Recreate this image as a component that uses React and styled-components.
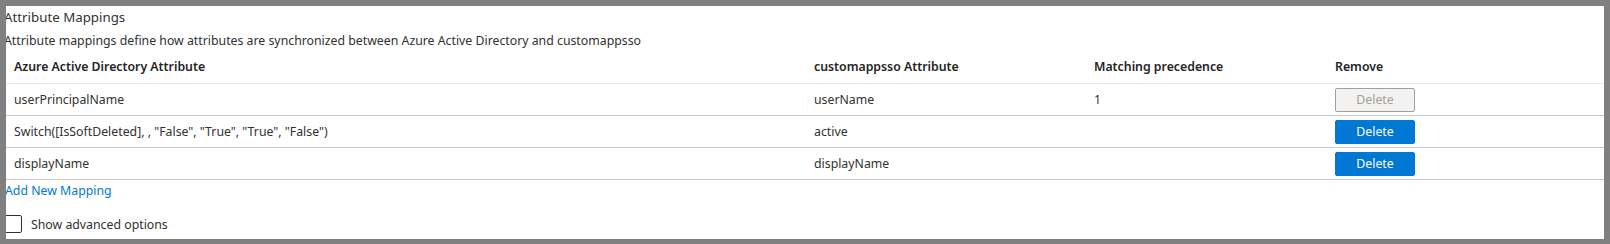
import React from "react";
import styled, { createGlobalStyle } from "styled-components";

const Global = createGlobalStyle`
  html, body { margin: 0; padding: 0; background: #808080; }
  body { font-family: "Segoe UI", "Noto Sans", "Open Sans", sans-serif; color: #323130; }
  * { box-sizing: border-box; }
`;

const Frame = styled.div`
  width: 1610px;
  height: 244px;
  border-style: solid;
  border-color: #808080;
  border-width: 6px 6px 5px 6px;
  background: #ffffff;
  overflow: hidden;
  display: flex;
  flex-direction: column;
  font-size: 12.3px;
`;

const Title = styled.div`
  margin-left: -2px;
  height: 22px;
  line-height: 22px;
  font-size: 13.3px;
  color: #323130;
`;

const Description = styled.div`
  margin-left: -2px;
  margin-top: 2px;
  height: 22px;
  line-height: 22px;
  font-size: 12.3px;
  color: #323130;
`;

const Table = styled.div`
  display: flex;
  flex-direction: column;
`;

const Row = styled.div`
  display: grid;
  grid-template-columns: 800px 280px 241px 1fr;
  align-items: center;
  height: 32px;
  padding-top: ${(p) => (p.$header ? "1px" : "0")};
  padding-bottom: ${(p) => (p.$header ? "2px" : "0")};
  border-bottom: 1px solid ${(p) => (p.$header ? "#edebe9" : "#c8c6c4")};
`;

const Cell = styled.div`
  padding-left: 8px;
  font-size: 12.3px;
  line-height: 18px;
  white-space: nowrap;
  font-weight: ${(p) => (p.$header ? 600 : 400)};
  color: ${(p) => (p.$header ? "#252423" : "#323130")};
`;

const DeleteButton = styled.button`
  width: 80px;
  height: 24px;
  padding: 0;
  border-radius: 2px;
  font-family: inherit;
  font-size: 12.3px;
  line-height: 20px;
  cursor: pointer;
  border: 1px solid ${(p) => (p.disabled ? "#a19f9d" : "#0078d4")};
  background: ${(p) => (p.disabled ? "#f3f2f1" : "#0078d4")};
  color: ${(p) => (p.disabled ? "#a19f9d" : "#ffffff")};
`;

const AddLink = styled.a`
  margin-left: -1px;
  height: 21px;
  line-height: 21px;
  font-size: 12.3px;
  color: #0078d4;
  text-decoration: none;
`;

const CheckRow = styled.label`
  margin-left: -2px;
  margin-top: 14px;
  display: flex;
  align-items: center;
  gap: 9px;
  font-size: 12.3px;
  color: #323130;
`;

const Box = styled.span`
  width: 18px;
  height: 18px;
  border: 1px solid #323130;
  border-radius: 2px;
  background: #fff;
`;

const rows = [
  { src: "userPrincipalName", dst: "userName", prec: "1", disabled: true },
  { src: 'Switch([IsSoftDeleted], , "False", "True", "True", "False")', dst: "active", prec: "", disabled: false },
  { src: "displayName", dst: "displayName", prec: "", disabled: false },
];

export default function App() {
  return (
    <>
      <Global />
      <Frame>
        <Title>Attribute Mappings</Title>
        <Description>
          Attribute mappings define how attributes are synchronized between Azure Active Directory and customappsso
        </Description>
        <Table>
          <Row $header>
            <Cell $header>Azure Active Directory Attribute</Cell>
            <Cell $header>customappsso Attribute</Cell>
            <Cell $header>Matching precedence</Cell>
            <Cell $header>Remove</Cell>
          </Row>
          {rows.map((r) => (
            <Row key={r.src}>
              <Cell>{r.src}</Cell>
              <Cell>{r.dst}</Cell>
              <Cell>{r.prec}</Cell>
              <Cell>
                <DeleteButton disabled={r.disabled}>Delete</DeleteButton>
              </Cell>
            </Row>
          ))}
        </Table>
        <AddLink href="#">Add New Mapping</AddLink>
        <CheckRow>
          <Box />
          Show advanced options
        </CheckRow>
      </Frame>
    </>
  );
}
